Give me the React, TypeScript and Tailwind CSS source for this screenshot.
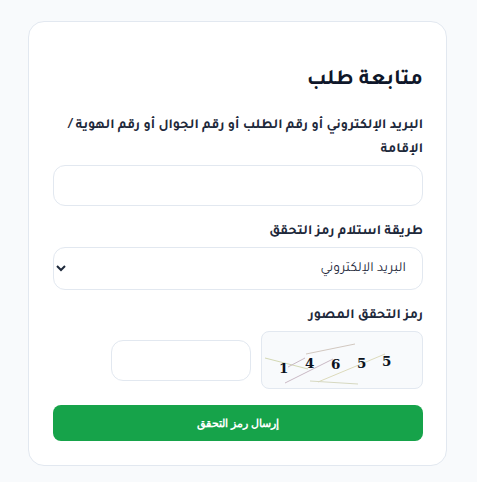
import React from 'react';

const fontStack = { fontFamily: 'Tajawal, "DejaVu Sans", sans-serif' };

// distorted lines + digits of the captcha picture
const CaptchaImage: React.FC = () => (
  <div className="w-[162px] h-[58px] rounded-lg border border-[#e2e8f0] bg-[#f8fafc] overflow-hidden shrink-0">
    <svg className="[direction:ltr]" width="160" height="56" viewBox="0 0 160 56">
      <line x1="3" y1="26" x2="46" y2="37" stroke="#d3d8b4" strokeWidth="1" />
      <line x1="26" y1="35" x2="43" y2="26" stroke="#c9b9c4" strokeWidth="1" />
      <line x1="44" y1="22" x2="93" y2="12" stroke="#d2c8c0" strokeWidth="1" />
      <line x1="23" y1="51" x2="71" y2="27" stroke="#c9b9c4" strokeWidth="1" />
      <line x1="56" y1="50" x2="123" y2="22" stroke="#dcdabb" strokeWidth="1" />
      <line x1="48" y1="49" x2="96" y2="52" stroke="#d6d8c0" strokeWidth="1" />
      <g fill="#0b1220" fontFamily='"DejaVu Serif", serif' fontSize="13.5" fontWeight="700">
        <text x="17" y="41">1</text>
        <text x="43" y="36">4</text>
        <text x="69" y="37">6</text>
        <text x="95" y="36">5</text>
        <text x="120" y="34">5</text>
      </g>
    </svg>
  </div>
);

export default function App() {
  return (
    <div dir="rtl" className="min-h-[482px] bg-[#f8fafc] pr-[30px] pt-[21px]" style={fontStack}>
      <div className="w-[419px] h-[445px] rounded-2xl border border-[#e2e8f0] bg-white pr-[23px] pl-[24px] pt-[42px]">
        <h1 className="text-[22px] leading-[34px] font-bold text-[#0f172a]">متابعة طلب</h1>

        <form className="mt-[13px]">
          <label className="block pt-[3px] text-[14px] leading-[24px] font-bold text-[#1e293b]">
            البريد الإلكتروني أو رقم الطلب أو رقم الجوال أو رقم الهوية / الإقامة
          </label>
          <input className="block mt-[3px] w-full h-[41px] rounded-xl border border-[#e2e8f0] bg-white" />

          <label className="block mt-[11px] pt-[3px] text-[14px] leading-[24px] font-bold text-[#1e293b]">
            طريقة استلام رمز التحقق
          </label>
          <select className="block mt-[3px] w-full h-[43px] rounded-xl border border-[#e2e8f0] bg-white px-[12px] text-[13.8px] text-[#1e293b]">
            <option>البريد الإلكتروني</option>
          </select>

          <label className="block mt-[11px] pt-[3px] text-[14px] leading-[24px] font-bold text-[#1e293b]">
            رمز التحقق المصور
          </label>
          <div className="mt-[3px] flex items-center gap-[10px]">
            <CaptchaImage />
            <input className="w-[140px] h-[41px] rounded-xl border border-[#e2e8f0] bg-white" />
          </div>

          <button
            type="button"
            className="block mt-[16px] w-full h-[36px] rounded-lg bg-[#16a34a] text-white text-[11.25px] font-bold"
            style={{ fontFamily: 'Arial, sans-serif' }}
          >
            إرسال رمز التحقق
          </button>
        </form>
      </div>
    </div>
  );
}
